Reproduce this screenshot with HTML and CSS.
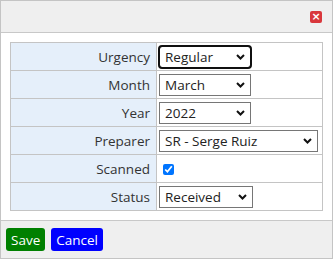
FILE: index.html
```html
<!DOCTYPE html>
<html lang="en">
<head>
  <meta charset="UTF-8" />
  <title>Edit record</title>
  <link rel="stylesheet" href="styles.css">
</head>
<body>
  <div class="dialog">
    <div class="dialog-head">
      <span class="close-btn">&times;</span>
    </div>

    <div class="dialog-body">
      <table class="form-table">
        <tr>
          <td class="label">Urgency</td>
          <td>
            <span class="select-wrap">
              <select class="sel focused">
                <option>Regular</option>
                <option>Urgent</option>
              </select>
              <svg class="chevron" width="9" height="6" viewBox="0 0 9 6"><path d="M1 1l3.5 3.5L8 1" fill="none" stroke="#111" stroke-width="2"/></svg>
            </span>
          </td>
        </tr>
        <tr>
          <td class="label">Month</td>
          <td>
            <span class="select-wrap">
              <select class="sel">
                <option>March</option>
              </select>
              <svg class="chevron" width="9" height="6" viewBox="0 0 9 6"><path d="M1 1l3.5 3.5L8 1" fill="none" stroke="#111" stroke-width="2"/></svg>
            </span>
          </td>
        </tr>
        <tr>
          <td class="label">Year</td>
          <td>
            <span class="select-wrap">
              <select class="sel">
                <option>2022</option>
              </select>
              <svg class="chevron" width="9" height="6" viewBox="0 0 9 6"><path d="M1 1l3.5 3.5L8 1" fill="none" stroke="#111" stroke-width="2"/></svg>
            </span>
          </td>
        </tr>
        <tr>
          <td class="label">Preparer</td>
          <td>
            <span class="select-wrap">
              <select class="sel wide">
                <option>SR - Serge Ruiz</option>
              </select>
              <svg class="chevron" width="9" height="6" viewBox="0 0 9 6"><path d="M1 1l3.5 3.5L8 1" fill="none" stroke="#111" stroke-width="2"/></svg>
            </span>
          </td>
        </tr>
        <tr>
          <td class="label">Scanned</td>
          <td><input type="checkbox" class="check" checked /></td>
        </tr>
        <tr>
          <td class="label">Status</td>
          <td>
            <span class="select-wrap">
              <select class="sel status">
                <option>Received</option>
              </select>
              <svg class="chevron" width="9" height="6" viewBox="0 0 9 6"><path d="M1 1l3.5 3.5L8 1" fill="none" stroke="#111" stroke-width="2"/></svg>
            </span>
          </td>
        </tr>
      </table>
    </div>

    <div class="dialog-foot">
      <button class="btn btn-save">Save</button>
      <button class="btn btn-cancel">Cancel</button>
    </div>
  </div>
</body>
</html>
```

FILE: styles.css
```css
body {
  margin: 0;
  font-family: 'Open Sans', sans-serif;
  font-size: 13.5px;
  color: #333;
  background: #fff;
}

.dialog {
  width: 331px;
  height: 257px;
  border: 1px solid #c4c4c4;
  display: flex;
  flex-direction: column;
}

.dialog-head {
  height: 31px;
  background: #efefef;
  border-bottom: 1px solid #c8c8c8;
  display: flex;
  align-items: center;
  justify-content: flex-end;
  padding-right: 10px;
}

.close-btn {
  width: 12px;
  height: 12px;
  background: #d9373c;
  border-radius: 2px;
  color: #fff;
  font-family: 'DejaVu Sans', sans-serif;
  font-size: 11px;
  font-weight: bold;
  line-height: 12px;
  text-align: center;
}

.dialog-body {
  flex: 1;
  padding: 9px 9px 0 9px;
}

.form-table {
  width: 100%;
  border-collapse: collapse;
}

.form-table td {
  border: 1px solid #c4c4c4;
  padding: 0 2px 0 2px;
  height: 27px;
}

.form-table td.label {
  width: 137px;
  background: #e5effa;
  text-align: right;
  padding-right: 6px;
}

.select-wrap {
  position: relative;
  display: inline-block;
  vertical-align: middle;
}

.sel {
  display: block;
  appearance: none;
  font-family: 'Open Sans', sans-serif;
  font-size: 13.5px;
  width: 92px;
  height: 22px;
  padding: 0 0 0 5px;
  color: #222;
  border: 1px solid #767676;
  border-radius: 0;
  background: #fff;
}

.sel.wide {
  width: 159px;
}

.sel.status {
  width: 94px;
}

.sel.focused {
  outline: 2px solid #101010;
  outline-offset: -1px;
  border-radius: 3px;
}

.chevron {
  position: absolute;
  right: 6px;
  top: 8px;
  pointer-events: none;
}

.check {
  margin: 3px 3px 3px 4px;
  width: 11px;
  height: 11px;
  vertical-align: middle;
}

.dialog-foot {
  background: #efefef;
  border-top: 1px solid #c8c8c8;
  padding: 7px 5px;
  display: flex;
  gap: 6px;
}

.btn {
  font-family: 'Open Sans', sans-serif;
  font-size: 13.5px;
  color: #fff;
  border: none;
  border-radius: 3px;
  height: 23px;
  padding: 0 5px;
}

.btn-save {
  background: #008000;
}

.btn-cancel {
  background: #0000ff;
}
```
